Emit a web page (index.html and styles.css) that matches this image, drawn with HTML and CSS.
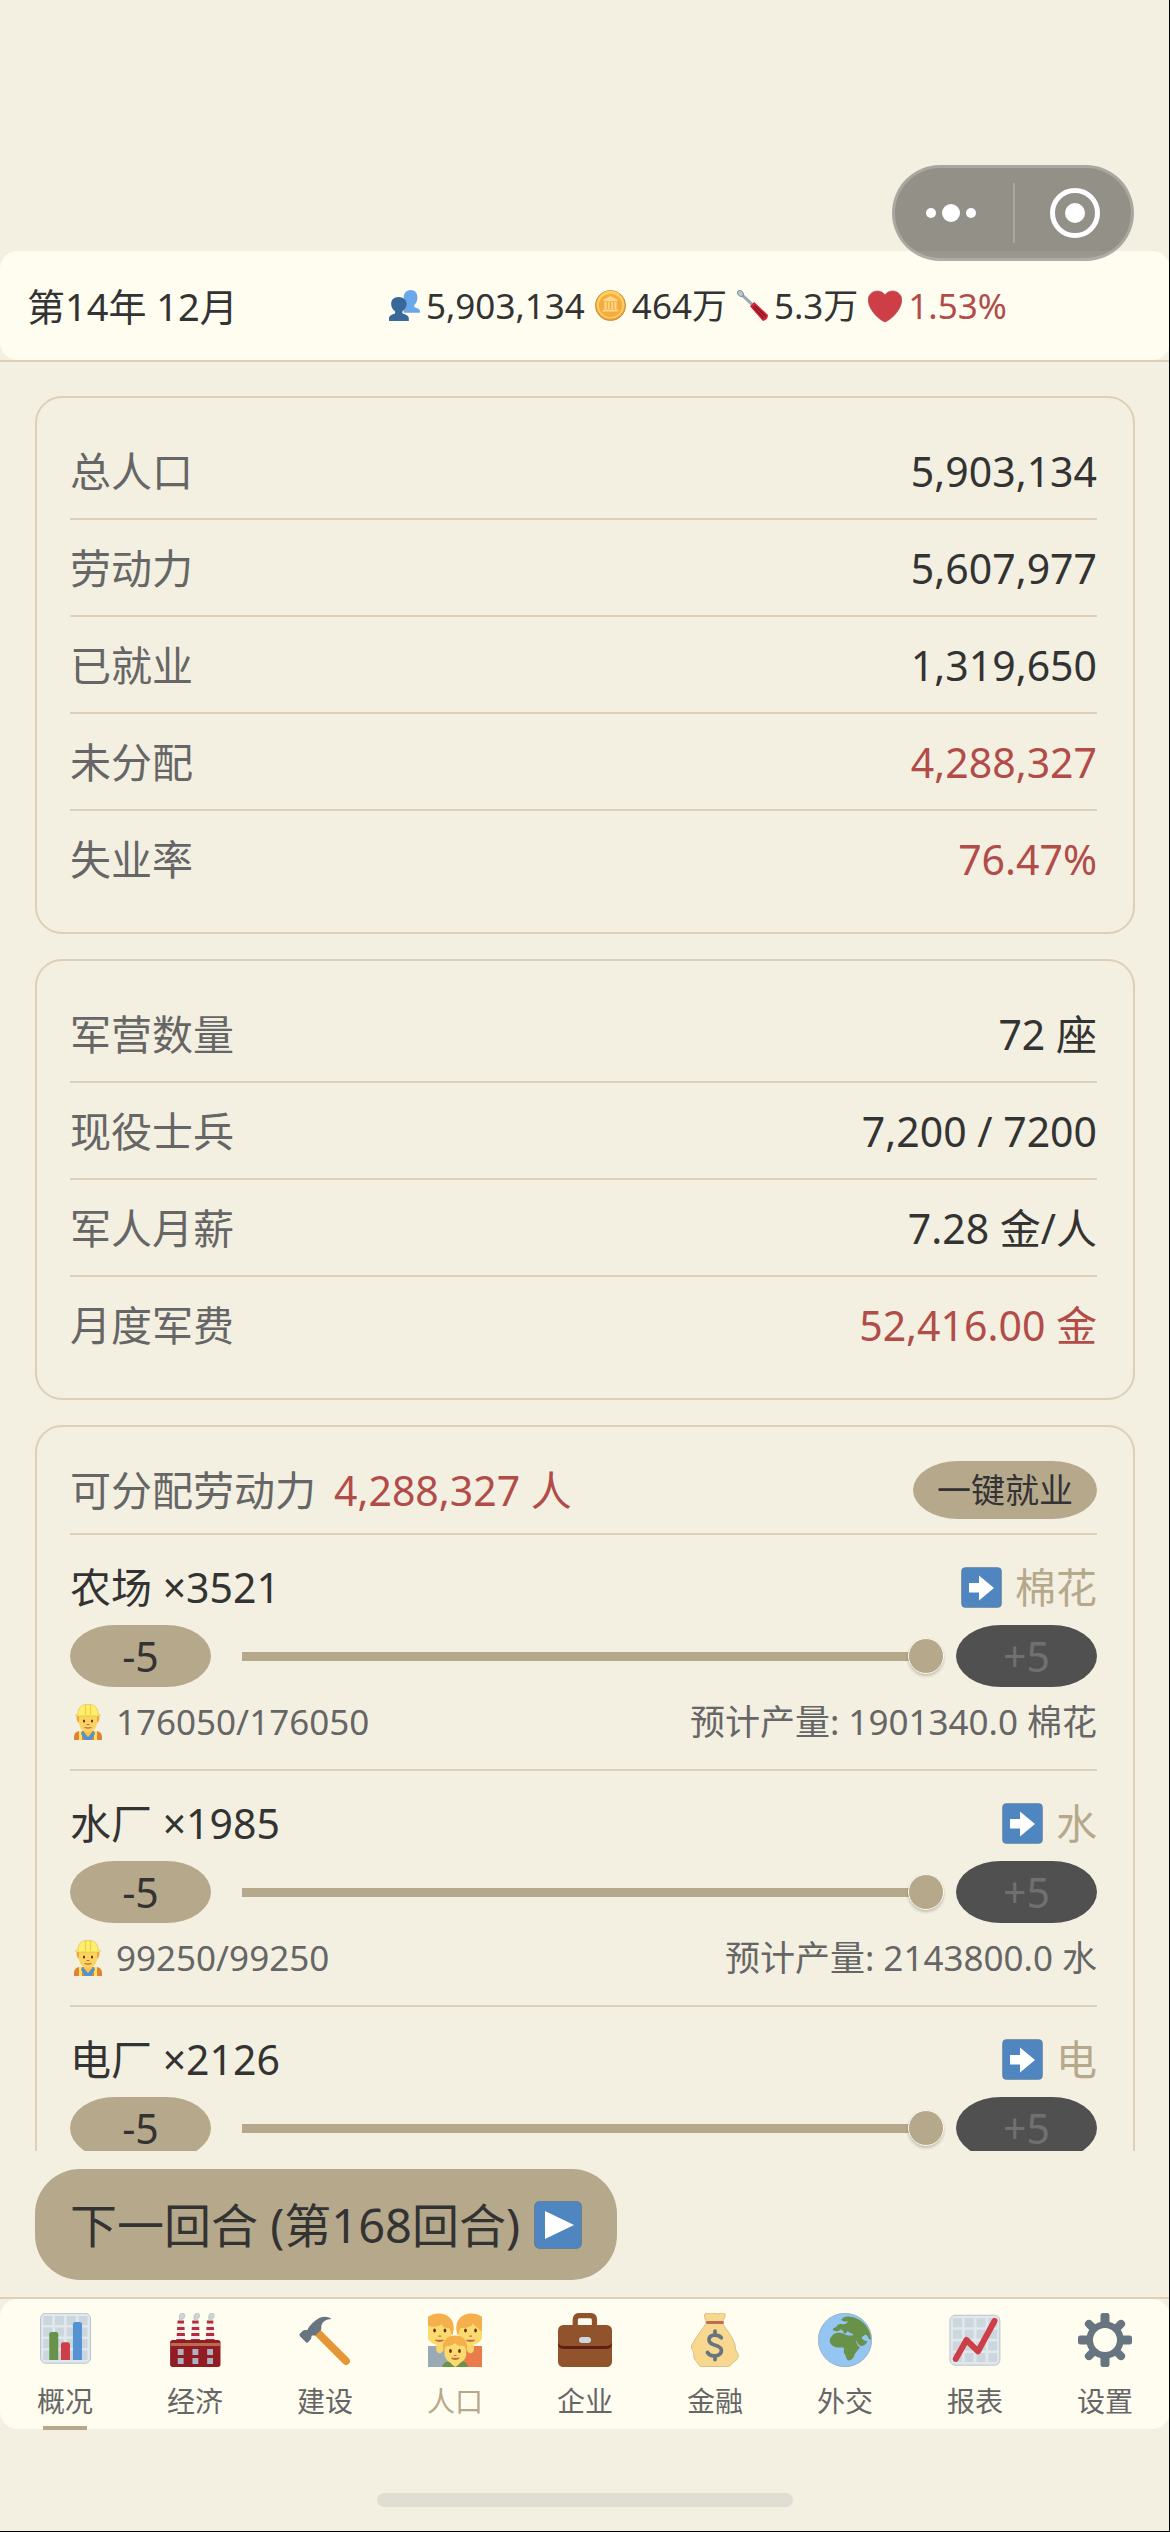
FILE: index.html
```html
<!DOCTYPE html>
<html lang="zh-CN">
<head>
<meta charset="utf-8">
<meta name="viewport" content="width=device-width, initial-scale=1">
<title>人口</title>
<link rel="stylesheet" href="styles.css">
</head>
<body>
<svg class="sprite" aria-hidden="true">
  <symbol id="i-worker" viewBox="0 0 36 36">
    <path fill="#e2803a" d="M4 36v-3c0-4 3-6 6-6h16c3 0 6 2 6 6v3z"/>
    <path fill="#ffe650" d="M9 27h3v9H9zM24 27h3v9h-3z"/>
    <path fill="#4f93d8" d="M12 27l6 6 6-6 1 3-4 6h-6l-4-6z"/>
    <path fill="#f2c84f" d="M14 23h8v5l-4 5-4-5z"/>
    <path fill="#f0a63c" d="M7 12c-1 2 0 6 2 7l18 0c2-1 3-5 2-7z"/>
    <path fill="#f9d460" d="M9 11h18v8c0 5-4 9-9 9s-9-4-9-9z"/>
    <path fill="#fff06a" stroke="#d9b93a" stroke-width=".6" d="M8 10C8 3 12 .4 18 .4S28 3 28 10c2 0 3 1 2 2H6c-1-1 0-2 2-2z"/>
    <path fill="none" stroke="#f4c84e" stroke-width="1.2" d="M15.500 1v10M20.500 1v10"/>
    <ellipse cx="14" cy="17" rx="1" ry="1.600" fill="#662113"/><ellipse cx="22" cy="17" rx="1" ry="1.600" fill="#662113"/>
    <path fill="none" stroke="#c1694f" stroke-width="1.200" stroke-linecap="round" d="M17 20.500h2M15 23.500c2 .7 4 .7 6 0"/>
  </symbol>
  <symbol id="i-arrow" viewBox="0 0 41 41">
    <rect x=".5" y=".5" width="40" height="40" rx="4" fill="#4f86c0" stroke="#6b7f8f" stroke-opacity=".6"/>
    <path fill="#fff" d="M8 16h10V8.500L33 21 18 33.500V25.500H8z"/>
  </symbol>
</svg>

<div class="app">
  <div class="status-space"></div>
  <div class="capsule">
    <button class="capsule-btn more" type="button" aria-label="更多">
      <svg width="50" height="24" viewBox="0 0 50 24" fill="#fff"><circle cx="5" cy="12" r="5"/><circle cx="25" cy="12" r="9"/><circle cx="45" cy="12" r="5"/></svg>
    </button>
    <span class="capsule-line"></span>
    <button class="capsule-btn close" type="button" aria-label="关闭">
      <svg width="50" height="50" viewBox="0 0 50 50"><circle cx="25" cy="25" r="22.500" fill="none" stroke="#fff" stroke-width="5"/><circle cx="25" cy="25" r="10" fill="#fff"/></svg>
    </button>
  </div>

  <header class="top">
    <div class="top-inner">
      <div class="date">第14年 12月</div>
      <div class="stats">
        <span class="stat"><svg class="stat-icon" viewBox="0 0 36 36"><path fill="#69a9ea" d="M17 26.500h19v-2c0-2-2-3-6-4.500-1-.5-1-1.500-.5-2.500C32 15 33 12 33 8.500 33 3.500 30 0 25.500 0 20.500 0 17 3.500 17 9z"/><path fill="#386798" d="M0 36v-3c0-3 3-4.500 6.500-5.500 1-.5 1-2 .2-3C3.500 22 2.500 19 2.500 16c0-4.500 3-8 8.500-8s9.500 3.500 9.500 8c0 3-1.500 6-4.500 8.500-1 1-.8 2.500.2 3 4 1 6.800 2.500 6.800 5.500v3z"/></svg>5,903,134</span>
        <span class="stat"><svg class="stat-icon" viewBox="0 0 36 36"><circle cx="18" cy="18" r="17.500" fill="#f2a33c" stroke="#b98d45"/><circle cx="18" cy="17" r="16" fill="#ffcf5c"/><circle cx="18" cy="18" r="13.500" fill="#f4ab42"/><path fill="#ffd983" d="M18 7l8 4v2H10v-2zM11 14h2.500v8H11zM15 14h2v8h-2zM19 14h2v8h-2zM22.500 14H25v8h-2.500zM9 22.500h18V25H9z"/></svg>464万</span>
        <span class="stat"><svg class="stat-icon" viewBox="0 0 36 36"><path fill="none" stroke="#99aab5" stroke-width="3.500" d="M3 3l17 16"/><ellipse cx="4" cy="4" rx="4" ry="3" transform="rotate(45 4 4)" fill="#b8c6cf" stroke="#66757f" stroke-width=".8"/><path fill="#d0283a" d="M15 19l5-5 16 15c0 4-2 6-6 7z"/><path fill="none" stroke="#7d101c" stroke-width="1.300" d="M18.500 19.500L31 33M20.500 18L33.500 31"/></svg>5.3万</span>
        <span class="stat danger"><svg class="stat-icon heart" viewBox="0 0 36 36"><path fill="#cd3e47" stroke="#b04a50" stroke-width=".6" d="M35.900 11.800C35.900 6.400 31.500 2 26.100 2c-3.300 0-6.300 1.700-8.100 4.200C16.200 3.700 13.200 2 9.900 2 4.500 2 .1 6.400.1 11.800c0 .8.100 1.500.3 2.200C1.900 23.200 12 32.900 18 35c6-2.100 16.100-11.800 17.600-21 .2-.7.300-1.400.3-2.200z"/></svg>1.53%</span>
      </div>
    </div>
  </header>

  <main class="content">
    <dl class="card list">
      <div class="row"><dt>总人口</dt><dd>5,903,134</dd></div>
      <div class="row"><dt>劳动力</dt><dd>5,607,977</dd></div>
      <div class="row"><dt>已就业</dt><dd>1,319,650</dd></div>
      <div class="row"><dt>未分配</dt><dd class="danger">4,288,327</dd></div>
      <div class="row"><dt>失业率</dt><dd class="danger">76.47%</dd></div>
    </dl>

    <dl class="card list">
      <div class="row"><dt>军营数量</dt><dd>72 座</dd></div>
      <div class="row"><dt>现役士兵</dt><dd>7,200 / 7200</dd></div>
      <div class="row"><dt>军人月薪</dt><dd>7.28 金/人</dd></div>
      <div class="row"><dt>月度军费</dt><dd class="danger">52,416.00 金</dd></div>
    </dl>

    <section class="card">
      <div class="assign">
        <span class="assign-label">可分配劳动力</span>
        <span class="danger">4,288,327 人</span>
        <button class="pill assign-btn" type="button">一键就业</button>
      </div>

      <article class="sector">
        <div class="line title"><label for="farm">农场 ×3521</label><span class="product"><svg class="arrow"><use href="#i-arrow"/></svg>棉花</span></div>
        <div class="control"><button class="pill step" type="button">-5</button><input class="range" id="farm" type="range" min="0" max="176050" value="176050"><button class="pill step" type="button" disabled>+5</button></div>
        <div class="line info"><span class="workers"><svg class="worker"><use href="#i-worker"/></svg>176050/176050</span><span>预计产量: 1901340.0 棉花</span></div>
      </article>

      <article class="sector">
        <div class="line title"><label for="water">水厂 ×1985</label><span class="product"><svg class="arrow"><use href="#i-arrow"/></svg>水</span></div>
        <div class="control"><button class="pill step" type="button">-5</button><input class="range" id="water" type="range" min="0" max="99250" value="99250"><button class="pill step" type="button" disabled>+5</button></div>
        <div class="line info"><span class="workers"><svg class="worker"><use href="#i-worker"/></svg>99250/99250</span><span>预计产量: 2143800.0 水</span></div>
      </article>

      <article class="sector">
        <div class="line title"><label for="power">电厂 ×2126</label><span class="product"><svg class="arrow"><use href="#i-arrow"/></svg>电</span></div>
        <div class="control"><button class="pill step" type="button">-5</button><input class="range" id="power" type="range" min="0" max="106300" value="106300"><button class="pill step" type="button" disabled>+5</button></div>
      </article>
    </section>
  </main>

  <div class="actions">
    <button class="next" type="button">下一回合 (第168回合)<svg class="play" viewBox="0 0 48 48"><rect x=".5" y=".5" width="47" height="47" rx="5" fill="#4f86c0" stroke="#5f7485" stroke-opacity=".7"/><path fill="#fff" d="M11 10l29 14-29 14z"/></svg></button>
  </div>

  <nav class="tabs">
    <a class="tab marked" href="#overview"><svg class="tab-icon" viewBox="0 0 36 36"><rect x="1.700" y=".2" width="33.300" height="33.300" rx="3.500" fill="#e1e8ed" stroke="#a9b4bb" stroke-width=".5"/><path fill="#ccd6dd" d="M3.500 2h6v6h-6zM11.300 2h6v6h-6zM19.200 2h6v6h-6zM27 2h6v6h-6zM3.500 9.600h6v6h-6zM11.300 9.600h6v6h-6zM19.200 9.600h6v6h-6zM27 9.600h6v6h-6zM3.500 17.300h6v6h-6zM11.300 17.300h6v6h-6zM19.200 17.300h6v6h-6zM27 17.300h6v6h-6zM3.500 25h6v6.300h-6zM11.300 25h6v6.300h-6zM19.200 25h6v6.300h-6zM27 25h6v6.300h-6z"/><path fill="#68924a" d="M7.500 31.300V14.200q0-1.500 1.500-1.500h3q1.500 0 1.500 1.500v17.100z"/><path fill="#cd3e47" d="M15.300 31.300V21q0-1.500 1.500-1.500h3q1.500 0 1.500 1.500v10.300z"/><path fill="#5592d4" d="M23.300 31.300V7.500Q23.300 6 24.800 6h3q1.500 0 1.500 1.500v23.800z"/></svg><span>概况</span></a>
    <a class="tab" href="#economy"><svg class="tab-icon" viewBox="0 0 36 36"><path fill="#eceff1" d="M6.500 5h4.200l.8 14H5.500zM16.200 5h4.200l.8 14h-6zM26 5h4.200l.8 14h-6z"/><path fill="#b52b38" d="M6.400 5h4.200v2H6.300zM6.100 9.300h4.900l.1 2H6zM5.900 13.300h5.300l.1 2H5.800zM5.600 17.300h5.900V19H5.500zM16.200 5h4.200v2h-4.300zM15.900 9.300h4.900l.1 2h-5.100zM15.600 13.300h5.300l.1 2h-5.500zM15.300 17.300h5.900V19h-6zM26 5h4.200v2h-4.300zM25.700 9.300h4.900l.1 2h-5.100zM25.400 13.300h5.300l.1 2h-5.500zM25.100 17.300H31V19h-6z"/><g fill="#cfd4d8" stroke="#a6adb3" stroke-width=".4"><path d="M8 5c-1-2-.4-5 1.600-5s2.200 3 .2 4.200L9 5zM17.800 5c-1-2-.4-5 1.600-5s2.200 3 .2 4.200l-.8.800zM27.600 5c-1-2-.4-5 1.600-5s2.200 3 .2 4.200l-.8.800z"/></g><rect x="1.400" y="18" width="33.600" height="18" rx="1.800" fill="#931c22"/><path fill="#b86d55" d="M1.800 20h32.800v2H1.800z"/><path fill="#aab4c0" d="M6.500 24h3.900v4H6.500zM16.300 24h3.900v4h-3.900zM26.100 24H30v4h-3.900zM6.500 30h3.900v4H6.500zM16.300 30h3.900v4h-3.900zM26.100 30H30v4h-3.900z"/></svg><span>经济</span></a>
    <a class="tab" href="#build"><svg class="tab-icon" viewBox="0 0 36 36"><path stroke="#e69636" stroke-width="5.200" stroke-linecap="round" d="M13.500 13.500l18.500 18.500"/><path fill="#66757f" d="M22.400 4c-1-1.300-5-2.200-8-.8C11 5 7.500 8.500 6.300 11.300c-1.200 0-2.300-.2-3.100.5L1.100 14c-.4.500 0 1.100.4 1.600l4 4c.4.400 1 .2 1.400-.2l1.700-2c.6-.8 0-1.600.6-2.200.8-.7 2 .2 2.600-.4l3.500-3.500c.5-.6 0-2 .4-3.200.8-2.500 3.200-4 6.700-4.100z"/></svg><span>建设</span></a>
    <a class="tab current" href="#people" aria-current="page"><svg class="tab-icon" viewBox="0 0 36 36"><path fill="#9aaab5" d="M0 22h14v14H0z"/><path fill="#ea7b4b" d="M22 22h14v14H22z"/><path fill="#f9d76b" d="M5.500 19h4.600v5.500c0 3-4.600 3-4.600 0zM26 19h4.600v5.500c0 3-4.600 3-4.600 0z"/><path fill="#fbdb6e" d="M0 8h15.500v5.500C15.500 18 12 21.500 8 21.500c-3.500 0-6.500-1.500-8-4.500zM20.500 8H36v9c-1.500 3-4.500 4.500-8 4.500-4 0-7.500-3.500-7.500-8z"/><path fill="#f5b04c" d="M0 2.500C5-1 13-.5 16 5c1.500 3 1.500 6 .2 10-1.200-1-.8-4-2.200-5-3 .3-4.500-1-5-2.500C7 9.500 3 9.500 0 8.500zM36 2.500C31-1 23-.5 20 5c-1.500 3-1.500 6-.2 10 1.200-1 .8-4 2.200-5 3 .3 6-.5 8-2.500l6 5z"/><path fill="#699349" d="M9.500 36c0-2.500 3-4 5.500-4h6.500c3 0 5 1.500 5 4z"/><path fill="#fbdb6e" d="M15.500 30h5.500v4l-2.800 2-2.700-2zM11 21h14.500v6c0 4-3.500 7-7.200 7S11 31 11 27z"/><path fill="#f5b04c" d="M10 25c-1-6 2.500-10 8-10 6 0 9 4 8 10-1 0-1.200-2-1.800-3-3 0-5.200-.5-6.200-1.700-1.500 1.500-4 1.700-5.600 1.700-1 1-1.400 3-2.400 3z"/><g fill="#6b2a15"><ellipse cx="4.400" cy="11.700" rx=".9" ry="1.300"/><ellipse cx="11.300" cy="11.700" rx=".9" ry="1.300"/><ellipse cx="25" cy="11.700" rx=".9" ry="1.300"/><ellipse cx="31.700" cy="11.700" rx=".9" ry="1.300"/><ellipse cx="15" cy="25.300" rx=".9" ry="1.300"/><ellipse cx="21" cy="25.300" rx=".9" ry="1.300"/></g><path fill="#c1694f" d="M4.500 17.800h6.300c-.8 2-5.500 2-6.300 0zM25.200 17.800h6.300c-.8 2-5.500 2-6.300 0zM15.200 29.800h6c-.8 2-5.200 2-6 0zM7 15h1.800v.8H7zM27.500 15h1.800v.8h-1.800zM17.200 28h1.800v.7h-1.800z"/></svg><span>人口</span></a>
    <a class="tab" href="#company"><svg class="tab-icon" viewBox="0 0 36 36"><path fill="none" stroke="#91532b" stroke-width="3.500" d="M11.500 10V4.500q0-2.800 2.800-2.800h7.200q2.800 0 2.800 2.800V10"/><rect y="8" width="36" height="28" rx="3.500" fill="#91532b"/><path fill="#5e2014" d="M0 19.500Q.5 22 4 22h28q3.500 0 4-2.500V21q-.5 3-4 3H4q-3.500 0-4-3z"/><rect x="14" y="16" width="8" height="4" rx="2" fill="#ccd6dd"/></svg><span>企业</span></a>
    <a class="tab" href="#finance"><svg class="tab-icon" viewBox="0 0 36 36"><path fill="#f8d88e" stroke="#c9b078" stroke-width=".5" d="M12 7C12 4 10.500 2.500 11 1c1-1.500 2.500 0 3.500-.7S17 .3 18 .3 20.500 1 21.500.3s2.800-.8 3.300.7S23 5 23 7c2.500 4 7 9 8.300 14 .5 2.500.3 4 1.500 5.500 1.500 2 .5 4.500-1.500 5.500s-2.500 3.700-5 3.700H9.500c-2.500 0-3-2.500-4.500-4-1.800-1.800-.7-4-1.500-6-1.300-1.500-1.800-4 0-6C5.500 15.500 10 10.500 12 7z"/><rect x="12" y="5.300" width="12" height="2" rx="1" fill="#be6d4e"/><path fill="none" stroke="#66757f" stroke-width="2.500" stroke-linecap="round" d="M18 12v2.500M18 29v2M22.200 16.500C20 14 14 14 14 18c0 4.500 8.300 2.500 8.300 7 0 4-7 5-9.300 1.300"/></svg><span>金融</span></a>
    <a class="tab" href="#diplomacy"><svg class="tab-icon" viewBox="0 0 36 36"><circle cx="18" cy="18" r="17.800" fill="#94c5f3" stroke="#8a9aa5" stroke-width=".4"/><path fill="#68924a" d="M15.500 4.500c1-2 4-2.500 6-2 4 .3 9 3 11.500 7.500 1.800 3 2.500 6 2 8-1.500-.5-1.500-3-3-3.500-1.500 0-2 1.500-3 1.500.5 2.500 3 3 4 2.500-.5 2-2.500 3.500-4 3.500-2 0-2.500-2-4-4.500 1 3.500 1.500 5 3 5-1.500 3-3.500 4-4 6.500-.8 1.700-2.500 3-4 2.500-1.500-1-1-3-2.500-4.500-.8-1.500.5-3-.7-4-3 0-6 .5-8-2C7 18.500 8 16.500 10 14.500c2-2 6-1.500 7.500-.5 2 1.200 4 1.200 6 .8-.5-2-3-1-3.500-3-.8.5-.8 1.800-2 1.800s-1.200-2.500-2.500-2.600c-1.500.1-1.500 1.500-3 1.200-1-.3-3.200 0-2.500-1.700.8-1 2.300-.7 2.700-2C13 7.500 15 7 16 7.500c1.500.3 3.500-.5 4-2-1.500.3-3 .5-4.500-1z"/></svg><span>外交</span></a>
    <a class="tab" href="#report"><svg class="tab-icon" viewBox="0 0 36 36"><rect x="1.300" y="1.500" width="33.300" height="33.300" rx="3.500" fill="#e1e8ed" stroke="#a9b4bb" stroke-width=".5"/><path fill="#ccd6dd" d="M3.300 3.500h6v6h-6zM11.100 3.500h6v6h-6zM19 3.500h6v6h-6zM26.800 3.500h6v6h-6zM3.300 11.200h6v6h-6zM11.100 11.200h6v6h-6zM19 11.200h6v6h-6zM26.800 11.200h6v6h-6zM3.300 19h6v6h-6zM11.100 19h6v6h-6zM19 19h6v6h-6zM26.800 19h6v6h-6zM3.300 26.700h6v6h-6zM11.100 26.700h6v6h-6zM19 26.700h6v6h-6zM26.800 26.700h6v6h-6z"/><path fill="none" stroke="#cd3e47" stroke-width="4" stroke-linecap="round" stroke-linejoin="round" d="M5.200 30.600L12.300 18 20 25.600 31 5.300"/></svg><span>报表</span></a>
    <a class="tab" href="#settings"><svg class="tab-icon" viewBox="0 0 36 36" fill="none" stroke="#66757f"><circle cx="18" cy="18" r="10.200" stroke-width="4.400"/><path stroke-width="3" stroke-linejoin="round" d="M16.500 1.500h3v5h-3zM16.500 29.500h3v5h-3zM1.500 16.500h5v3h-5zM29.500 16.500h5v3h-5z"/><path stroke-width="5.400" stroke-linecap="round" d="M7.300 7.300l2 2M28.700 7.300l-2 2M7.300 28.700l2-2M28.700 28.700l-2-2"/></svg><span>设置</span></a>
  </nav>
  <div class="home"><span class="home-bar"></span></div>
</div>
</body>
</html>
```

FILE: styles.css
```css
:root {
  --bg: #f4f0e1;
  --panel: #fffdf0;
  --line: #ddcfb8;
  --tan: #b6a88b;
  --ink: #333;
  --muted: #666;
  --danger: #b14c49;
}

* { box-sizing: border-box; }

body {
  margin: 0;
  background: var(--bg);
  color: var(--ink);
  font-family: "Noto Sans", "Noto Sans CJK SC", sans-serif;
  font-size: 41px;
  line-height: 48px;
}

button {
  border: 0;
  margin: 0;
  padding: 0;
  font: inherit;
  color: inherit;
  background: none;
}

svg { display: block; flex: none; }

.sprite { position: absolute; width: 0; height: 0; }

.app {
  position: relative;
  display: flex;
  flex-direction: column;
  height: 100vh;
}

/* Thin dark edge of the window */
.app::after {
  content: "";
  position: absolute;
  inset: 0;
  border: solid #000;
  border-width: 0 1px 1px 0;
  pointer-events: none;
}

.status-space { flex: none; height: 251px; }

.capsule {
  position: absolute;
  top: 165px;
  right: 36px;
  z-index: 2;
  display: flex;
  align-items: center;
  width: 242px;
  height: 96px;
  border: 3px solid rgba(255, 255, 255, .2);
  border-radius: 48px;
  background: rgba(0, 0, 0, .4);
}

.capsule-btn {
  flex: 1;
  height: 100%;
  display: flex;
  align-items: center;
  justify-content: center;
}

.more { padding-right: 6px; }
.close { padding-left: 4px; }

.capsule-line { width: 2px; height: 60px; background: rgba(255, 255, 255, .2); }

.top { flex: none; border-bottom: 2px solid var(--line); }

.top-inner {
  display: flex;
  align-items: center;
  height: 109px;
  padding: 0 12px 0 27px;
  border-radius: 18px;
  background: var(--panel);
}

.date { font-size: 38px; white-space: nowrap; }

.stats {
  flex: 1;
  display: flex;
  justify-content: center;
  gap: 10px;
  font-size: 35px;
  white-space: nowrap;
}

.stat { display: flex; align-items: center; gap: 6px; }
.stat-icon { width: 31px; height: 31px; }
.heart { width: 34px; height: 34px; }

.danger { color: var(--danger); }

.content {
  flex: 1;
  min-height: 0;
  overflow: hidden auto;
  scrollbar-width: none;
  padding: 34px 35px 0;
  display: flex;
  flex-direction: column;
  gap: 25px;
}

.card {
  flex: none;
  margin: 0;
  padding: 25px 36px 25px 33px;
  border: 2px solid var(--line);
  border-radius: 27px;
}

.row {
  display: flex;
  align-items: center;
  justify-content: space-between;
  height: 97px;
  border-bottom: 2px solid var(--line);
}

.row:last-child { height: 96px; border-bottom: 0; }
.row dt { color: var(--muted); }
.row dd { margin: 0; }

.pill {
  border-radius: 45px / 50%;
  background: var(--tan);
  text-align: center;
}

.assign {
  display: flex;
  align-items: center;
  gap: 18px;
  height: 83px;
  padding: 9px 0 14px;
  border-bottom: 2px solid var(--line);
}

.assign-label { color: var(--muted); }

.assign-btn {
  margin-left: auto;
  width: 184px;
  height: 58px;
  font-size: 34px;
}

.sector {
  padding: 25px 0 23px;
  border-bottom: 2px solid var(--line);
  display: flex;
  flex-direction: column;
  gap: 11px;
}

.line { display: flex; justify-content: space-between; align-items: center; }
.title { height: 54px; }
.info { height: 48px; font-size: 35px; color: var(--muted); }

.product { display: flex; align-items: center; gap: 13px; color: var(--tan); }
.arrow { width: 41px; height: 41px; }
.workers { display: flex; align-items: center; gap: 10px; }
.worker { width: 36px; height: 36px; }

.control { display: flex; align-items: center; }
.step { width: 141px; height: 62px; }
.step:disabled { background: #505050; color: #707070; }

.range {
  appearance: none;
  flex: 1;
  min-width: 0;
  height: 36px;
  margin: 0 12px 0 31px;
  background: linear-gradient(var(--tan), var(--tan)) left center / calc(100% - 16px) 9px no-repeat;
}

.range::-webkit-slider-thumb {
  appearance: none;
  width: 36px;
  height: 36px;
  border: 1px solid #fbf9f0;
  border-radius: 50%;
  background: var(--tan);
  box-shadow: 0 2px 3px rgba(0, 0, 0, .2);
}

.actions { flex: none; padding: 18px 35px 17px; }

.next {
  display: flex;
  align-items: center;
  gap: 14px;
  height: 111px;
  padding: 0 35px;
  border-radius: 45px;
  background: var(--tan);
  font-size: 47px;
}

.play { width: 48px; height: 48px; }

.tabs {
  flex: none;
  display: grid;
  grid-template-columns: repeat(9, 1fr);
  height: 132px;
  background: linear-gradient(var(--line), var(--line)) top / 100% 2px no-repeat;
  padding-top: 2px;
  position: relative;
}

.tabs::before {
  content: "";
  position: absolute;
  inset: 2px 0 0;
  border-radius: 18px;
  background: var(--panel);
}

.tab {
  position: relative;
  display: flex;
  flex-direction: column;
  align-items: center;
  gap: 14px;
  padding-top: 14px;
  font-size: 28px;
  line-height: 40px;
  color: var(--muted);
  text-decoration: none;
}

.tab-icon { width: 54px; height: 54px; }
.current { color: var(--tan); }

.marked::after {
  content: "";
  position: absolute;
  left: 50%;
  bottom: -1px;
  width: 44px;
  height: 4px;
  margin-left: -22px;
  background: var(--tan);
}

.home {
  flex: none;
  display: flex;
  justify-content: center;
  height: 103px;
  padding-top: 64px;
}

.home-bar { width: 416px; height: 14px; border-radius: 7px; background: #e0ded2; }
```
